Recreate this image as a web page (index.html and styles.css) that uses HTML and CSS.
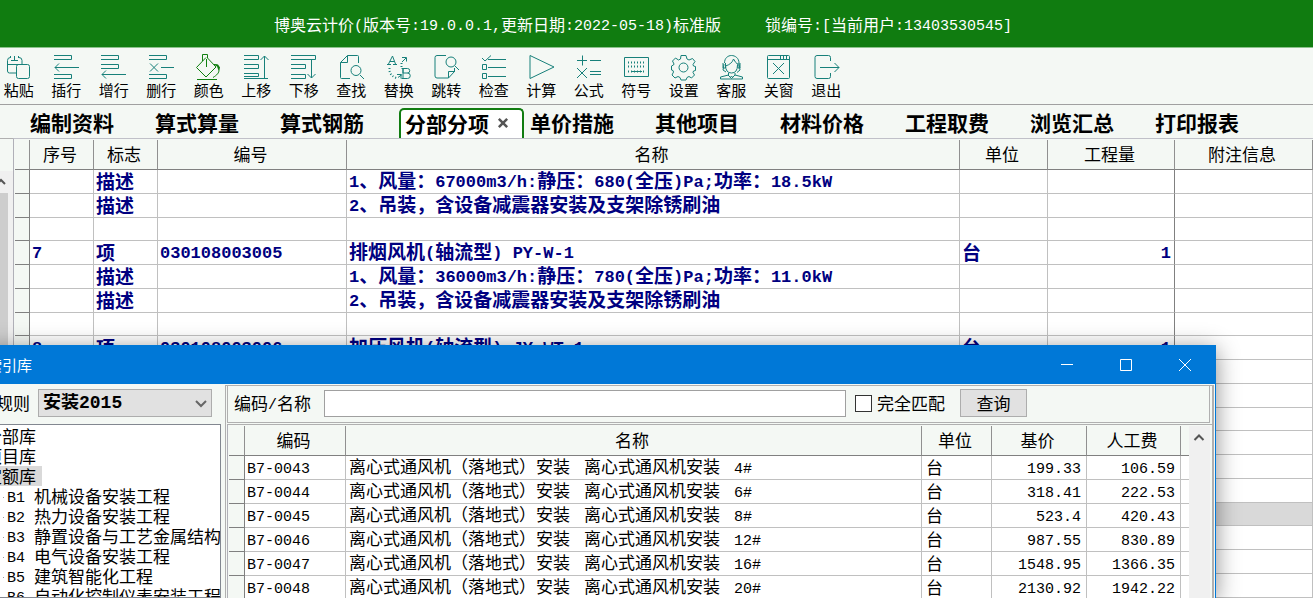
FILE: index.html
```html
<!DOCTYPE html>
<html lang="zh-CN">
<head>
<meta charset="utf-8">
<title>博奥云计价</title>
<link rel="stylesheet" href="styles.css">
</head>
<body>
<header class="titlebar">
  <span>博奥云计价<i>(</i>版本号<i>:19.0.0.1,</i>更新日期<i>:2022-05-18)</i>标准版</span>
  <span>锁编号<i>:[</i>当前用户<i>:13403530545]</i></span>
</header>

<nav class="toolbar" aria-label="工具栏">
  <div class="tools">
    <button class="tool"><svg viewBox="0 0 25 25"><path d="M4.500 2.500a3 3 0 0 0-3 3V16a2 2 0 0 0 2 2H10M1.500 9.500H16M8.500 1V6M5 5.500h7M13 2.500a3 3 0 0 1 3 3V9M4.500 1v2M12.500 1v2"/><rect x="10.500" y="9.500" width="13" height="14" rx="2"/></svg>粘贴</button>
    <button class="tool"><svg viewBox="0 0 25 25"><path d="M0 .5h17.500v4H0M1 12.500h24M5 8.500l-4 4 4 4M0 19.500h17.500v4H0"/></svg>插行</button>
    <button class="tool"><svg viewBox="0 0 25 25"><path d="M0 .5h17.500v4H0M0 9.500h17.500v4H0M1 19.500h24M5 15.500l-4 4 4 4"/></svg>增行</button>
    <button class="tool"><svg viewBox="0 0 25 25"><path d="M0 .5h17.500v4H0M1 8.500l8 8M9 8.500l-8 8M12 12.500h13M0 19.500h17.500v4H0"/></svg>删行</button>
    <button class="tool tool-color"><svg viewBox="0 0 25 25"><path d="M6.500 6V-.5h5V3l8.500 9-10 10L.5 12.500l9.500-10M10.500 4v8M18 9.500c4 0 5.500 2 5 5.500 0 3-2 5-6 7.500M1 24.500h20"/><path class="solid" d="M17 9l5 .5 2 3-1.500 3-1.500-4z"/></svg>颜色</button>
    <button class="tool"><svg viewBox="0 0 25 25"><path d="M0 .5h14.500v4H0M0 9.500h14.500v4H0M0 18.500h14.500v3H0M0 23.500h24M20.500 23V1M16.500 5l4-4 4 4"/></svg>上移</button>
    <button class="tool"><svg viewBox="0 0 25 25"><path d="M0 .5h24.500v4H0M0 9.500h14.500v4H0M0 19.500h14.500v4H0M20.500 5v18M16.500 19l4 4 4-4"/></svg>下移</button>
    <button class="tool"><svg viewBox="0 0 25 25"><path d="M8.500.5h10a1 1 0 0 1 1 1V8M8.500.5l-7 7V22.500a1 1 0 0 0 1 1H11M1.500 7.500h7v-7M21 20l4 4"/><circle cx="17" cy="15.500" r="5"/></svg>查找</button>
    <button class="tool"><svg viewBox="0 0 25 25"><path d="M1 9.500h4M7 9.500h4M2.500 9l4-8 3 8M4 6.500h4M15.500 13.500h6a2 2 0 0 1 0 4.500h-4.500v-4.500v9.500M15.500 23.500h6a2.500 2.500 0 0 0 0-5.500"/><path d="M16 2.500h4.500v4M20 3l-4 4M12 22.500l4-3M11 19.500h4v4"/><path class="dots" d="M15.500 8v4M3.500 13v3q1 5 7 7"/></svg>替换</button>
    <button class="tool"><svg viewBox="0 0 25 25"><path d="M12 .5H3a2 2 0 0 0-2 2V21a2 2 0 0 0 2 2h11.500l6-6.500h-6v6.500M20.500 13v4M21 11l4 4"/><circle cx="17" cy="7" r="5"/></svg>跳转</button>
    <button class="tool"><svg viewBox="0 0 25 25"><path d="M1 3l3 3 6-5.500M7 4.500h18M7 12.500h18M7 21.500h18M1.500 9.500h4v5h-4zM1.500 18.500h4v5h-4z"/></svg>检查</button>
    <button class="tool"><svg viewBox="0 0 25 25"><path d="M1 .5l24 11.500L1 23.500z"/></svg>计算</button>
    <button class="tool"><svg viewBox="0 0 25 25"><path d="M1 5.500h10M6.500.5v10M14 5.500h11M1 13l10 10M11 13L1 23M14 16.500h11M14 19.500h11"/></svg>公式</button>
    <button class="tool"><svg viewBox="0 0 25 25"><path d="M.5 2.500h24v19H.5zM7 16.500h11"/><path class="dots" d="M4 7.500h18M4 11.500h18M4 16.500h18"/></svg>符号</button>
    <button class="tool"><svg viewBox="0 0 25 25"><path d="M10 .5h5l1 3.500 2 1 3.500-1.500 2.500 3-2 3 .5 1.500 2 .5v4l-2 .5-.5 1.500 1.500 2.500-3 3-2.500-1.500-2 1-1 2.500h-5l-1-2.500-2-1L4 23l-3-3 1.500-3-.5-1.500-1.500-.5v-4L2.500 10 3 9 1.500 6l3-3L7.500 5 9.500 4z"/><circle cx="12.500" cy="12.500" r="4.500"/></svg>设置</button>
    <button class="tool"><svg viewBox="0 0 25 25"><path d="M5.500 8C5.500 3 9 .5 12.500.5S20 3 20 8l1 7-3 2.500M5 9L4 15l3 2M6.500 11Q13 9 14.500 4q2 4 5 6M6.500 10q0 8 6 8t6-8M4 8v5h2.500V8M19 8v5h2V8M9.500 18v2L1.500 22v2h22v-2L16 20v-2M9 20l3.500 3.500L16 20M11 23l1.500-2 1.500 2"/></svg>客服</button>
    <button class="tool"><svg viewBox="0 0 25 25"><rect x="1.500" y=".5" width="22" height="23" rx="1"/><path d="M1 4.500h22M14.500 1v3M17.500 1v3M20.500 1v3M7 8l11 11M18 8L7 19"/></svg>关窗</button>
    <button class="tool"><svg viewBox="0 0 25 25"><path d="M16.500 6V2.500a2 2 0 0 0-2-2H3a2 2 0 0 0-2 2v19a2 2 0 0 0 2 2h11.500a2 2 0 0 0 2-2V18M6 12.500h19M20.500 8l4.500 4.500-4.500 4.500"/></svg>退出</button>
  </div>
</nav>

<nav class="tabs" aria-label="页签">
  <button class="tab">编制资料</button>
  <button class="tab">算式算量</button>
  <button class="tab">算式钢筋</button>
  <button class="tab active">分部分项<svg viewBox="0 0 12 12"><path d="M1 1l10 10M11 1L1 11"/></svg></button>
  <button class="tab">单价措施</button>
  <button class="tab">其他项目</button>
  <button class="tab">材料价格</button>
  <button class="tab">工程取费</button>
  <button class="tab">浏览汇总</button>
  <button class="tab">打印报表</button>
</nav>

<main class="work">
  <div class="side">
    <div class="side-head"></div>
    <div class="side-scroll"><svg viewBox="0 0 10 8"><path d="M-3 6l4-4 4 4"/></svg><div class="side-thumb"></div></div>
  </div>
  <div class="sheet">
  <table class="grid main-grid">
    <colgroup><col class="m-gut"><col class="m-no"><col class="m-flag"><col class="m-code"><col><col class="m-unit"><col class="m-qty"><col class="m-note"></colgroup>
    <thead><tr><th></th><th>序号</th><th>标志</th><th>编号</th><th>名称</th><th>单位</th><th>工程量</th><th>附注信息</th></tr></thead>
    <tbody>
      <tr><td></td><td></td><td>描述</td><td></td><td><i>1</i>、风量：<i>67000m3/h:</i>静压：<i>680(</i>全压<i>)Pa;</i>功率：<i>18.5kW</i></td><td></td><td></td><td></td></tr>
      <tr><td></td><td></td><td>描述</td><td></td><td><i>2</i>、吊装，含设备减震器安装及支架除锈刷油</td><td></td><td></td><td></td></tr>
      <tr><td></td><td></td><td></td><td></td><td></td><td></td><td></td><td></td></tr>
      <tr><td></td><td><i>7</i></td><td>项</td><td><i>030108003005</i></td><td>排烟风机<i>(</i>轴流型<i>) PY-W-1</i></td><td>台</td><td><i>1</i></td><td></td></tr>
      <tr><td></td><td></td><td>描述</td><td></td><td><i>1</i>、风量：<i>36000m3/h:</i>静压：<i>780(</i>全压<i>)Pa;</i>功率：<i>11.0kW</i></td><td></td><td></td><td></td></tr>
      <tr><td></td><td></td><td>描述</td><td></td><td><i>2</i>、吊装，含设备减震器安装及支架除锈刷油</td><td></td><td></td><td></td></tr>
      <tr><td></td><td></td><td></td><td></td><td></td><td></td><td></td><td></td></tr>
      <tr><td></td><td><i>8</i></td><td>项</td><td><i>030108003006</i></td><td>加压风机<i>(</i>轴流型<i>) JY-WT-1</i></td><td>台</td><td><i>1</i></td><td></td></tr>
      <tr><td></td><td></td><td></td><td></td><td></td><td></td><td></td><td></td></tr>
      <tr><td></td><td></td><td></td><td></td><td></td><td></td><td></td><td></td></tr>
      <tr><td></td><td></td><td></td><td></td><td></td><td></td><td></td><td></td></tr>
      <tr><td></td><td></td><td></td><td></td><td></td><td></td><td></td><td></td></tr>
      <tr><td></td><td></td><td></td><td></td><td></td><td></td><td></td><td></td></tr>
      <tr><td></td><td></td><td></td><td></td><td></td><td></td><td></td><td></td></tr>
      <tr class="picked"><td></td><td></td><td></td><td></td><td></td><td></td><td></td><td></td></tr>
      <tr><td></td><td></td><td></td><td></td><td></td><td></td><td></td><td></td></tr>
      <tr><td></td><td></td><td></td><td></td><td></td><td></td><td></td><td></td></tr>
      <tr><td></td><td></td><td></td><td></td><td></td><td></td><td></td><td></td></tr>
    </tbody>
  </table>
  </div>
</main>

<section class="window" aria-label="索引库">
  <div class="window-bar">
    <span class="window-name">索引库</span>
    <button class="win-btn" aria-label="最小化"><svg viewBox="0 0 12 12"><path d="M0 5.500h12"/></svg></button>
    <button class="win-btn" aria-label="最大化"><svg viewBox="0 0 12 12"><path d="M.5.5h11v11H.5z"/></svg></button>
    <button class="win-btn" aria-label="关闭"><svg viewBox="0 0 12 12"><path d="M0 0l12 12M12 0L0 12"/></svg></button>
  </div>
  <div class="window-body">
    <div class="left">
      <div class="rule">
        <label for="rule">规则</label>
        <div class="pick"><select id="rule"><option>安装2015</option></select><svg viewBox="0 0 12 8"><path d="M1 1l5 5 5-5"/></svg></div>
      </div>
      <ul class="tree">
        <li><span>分部库</span></li>
        <li><span>项目库</span></li>
        <li class="current"><span>定额库</span>
          <ul>
            <li><i>B1 </i>机械设备安装工程</li>
            <li><i>B2 </i>热力设备安装工程</li>
            <li><i>B3 </i>静置设备与工艺金属结构</li>
            <li><i>B4 </i>电气设备安装工程</li>
            <li><i>B5 </i>建筑智能化工程</li>
            <li><i>B6 </i>自动化控制仪表安装工程</li>
          </ul>
        </li>
      </ul>
    </div>
    <div class="right">
      <form class="search">
        <label for="key">编码<i>/</i>名称</label>
        <input id="key" type="text">
        <label class="exact"><input type="checkbox">完全匹配</label>
        <button type="button">查询</button>
      </form>
      <div class="results">
        <table class="grid result-grid">
          <colgroup><col class="r-gut"><col class="r-code"><col><col class="r-unit"><col class="r-price"><col class="r-labor"><col class="r-end"></colgroup>
          <thead><tr><th></th><th>编码</th><th>名称</th><th>单位</th><th>基价</th><th>人工费</th><th></th></tr></thead>
          <tbody>
            <tr><td></td><td><i>B7-0043</i></td><td><div class="parts"><span>离心式通风机（落地式）安装</span><span>离心式通风机安装</span><i>4#</i></div></td><td>台</td><td><i>199.33</i></td><td><i>106.59</i></td><td></td></tr>
            <tr><td></td><td><i>B7-0044</i></td><td><div class="parts"><span>离心式通风机（落地式）安装</span><span>离心式通风机安装</span><i>6#</i></div></td><td>台</td><td><i>318.41</i></td><td><i>222.53</i></td><td></td></tr>
            <tr><td></td><td><i>B7-0045</i></td><td><div class="parts"><span>离心式通风机（落地式）安装</span><span>离心式通风机安装</span><i>8#</i></div></td><td>台</td><td><i>523.4</i></td><td><i>420.43</i></td><td></td></tr>
            <tr><td></td><td><i>B7-0046</i></td><td><div class="parts"><span>离心式通风机（落地式）安装</span><span>离心式通风机安装</span><i>12#</i></div></td><td>台</td><td><i>987.55</i></td><td><i>830.89</i></td><td></td></tr>
            <tr><td></td><td><i>B7-0047</i></td><td><div class="parts"><span>离心式通风机（落地式）安装</span><span>离心式通风机安装</span><i>16#</i></div></td><td>台</td><td><i>1548.95</i></td><td><i>1366.35</i></td><td></td></tr>
            <tr><td></td><td><i>B7-0048</i></td><td><div class="parts"><span>离心式通风机（落地式）安装</span><span>离心式通风机安装</span><i>20#</i></div></td><td>台</td><td><i>2130.92</i></td><td><i>1942.22</i></td><td></td></tr>
          </tbody>
        </table>
        <div class="result-scroll"><svg viewBox="0 0 12 8"><path d="M1.500 7L6 2.500 10.500 7"/></svg></div>
      </div>
    </div>
  </div>
</section>
</body>
</html>
```

FILE: styles.css
```css
* { box-sizing: border-box; }

body {
  margin: 0;
  height: 100vh;
  overflow: hidden;
  position: relative;
  background: #f4f8f4;
  color: #000;
  font: 17px/20px "Noto Sans CJK SC", sans-serif;
}

button, input, select { font: inherit; color: inherit; border-radius: 0; margin: 0; }
button { background: none; border: 0; padding: 0; }
svg { fill: none; stroke: currentColor; overflow: visible; }

/* half-width characters */
i {
  font-family: "Liberation Mono", monospace;
  font-style: normal;
  font-size: 15px;
  line-height: 1;
  vertical-align: 1px;
  white-space: pre;
}

.titlebar {
  display: flex;
  justify-content: center;
  gap: 44px;
  height: 48px;
  padding: 14px 27px 0 0;
  background: #107c10;
  border-bottom: 1px solid #8cc28c;
  color: #fff;
  font-size: 16px;
}

.toolbar { height: 57px; overflow: hidden; border-bottom: 1px solid #a0a0a0; }
.tools { display: flex; width: 855px; margin-left: -5px; padding-top: 7px; }
.tool {
  flex: 1;
  display: flex;
  flex-direction: column;
  align-items: center;
  font-size: 15px;
}
.tool svg { width: 25px; height: 25px; color: #17807a; }
.tool.tool-color svg { color: #108010; }
.tool .dots { stroke-dasharray: 1 2; stroke-width: 2; }
.tool .solid { fill: currentColor; stroke: none; }

.tabs { display: flex; height: 33px; padding: 3px 0 0 24px; }
.tab {
  display: flex;
  align-items: center;
  width: 125px;
  flex: none;
  padding: 0 0 2px 6px;
  font-size: 21px;
  font-weight: 700;
}
.tab.active {
  gap: 9px;
  padding-left: 4px;
  border: 2px solid #107c10;
  border-bottom: 0;
  border-radius: 5px 5px 0 0;
  background: #fff;
}
.tab.active svg { width: 10px; height: 10px; color: #555; stroke-width: 3; }

.work { display: flex; }
.side { width: 13px; flex: none; display: flex; flex-direction: column; }
.side-head { height: 33px; border-top: 1px solid #b0b0b0; }
.side-scroll { flex: 1; width: 13px; background: #f0f0f0; display: flex; flex-direction: column; }
.side-scroll svg { width: 10px; height: 8px; margin: 7px 0; color: #555; stroke-width: 2; }
.side-thumb { flex: 1; width: 8px; background: #cdcdcd; }
.sheet { flex: 1; border-top: 1px solid #c0c0c8; border-left: 1px solid #b0b0b8; padding: 1px 0 0 1px; }

.grid { width: 100%; table-layout: fixed; border-collapse: separate; border-spacing: 0; }
.grid th {
  height: 30px;
  padding: 0 3px 2px 0;
  background: #f4f8f4;
  border-right: 1px solid #909090;
  border-bottom: 1px solid #808080;
  font-weight: 400;
}
.grid td {
  height: 24px;
  padding: 0 3px 2px 2px;
  white-space: nowrap;
  background: #fff;
  border-right: 1px solid #c0c0c0;
  border-bottom: 1px solid #c0c0c0;
  line-height: 20px;
}
.grid td:first-child { background: #f4f8f4; border-color: #808080; }
.grid tr:nth-child(4n + 3) td { height: 23px; }

.m-gut { width: 15px; }
.m-no, .m-flag { width: 64px; }
.m-code { width: 189px; }
.m-unit { width: 88px; }
.m-qty { width: 127px; }
.m-note { width: 138px; }
.main-grid td { color: #000080; font-size: 19px; font-weight: 700; }
.main-grid i { font-size: 17px; }
.main-grid td:nth-child(7) { text-align: right; border-right-color: #808080; }
.main-grid .picked td { background: #d9d9d9; }

.window {
  position: absolute;
  left: -16px;
  right: 97px;
  top: 345px;
  bottom: 0;
  display: flex;
  flex-direction: column;
  background: #f4f8f4;
  border-right: 1px solid #0078d7;
  box-shadow: 0 4px 22px rgba(0, 0, 0, 0.45);
}
.window-bar {
  flex: none;
  display: flex;
  align-items: center;
  height: 39px;
  padding: 0 24px 0 3px;
  background: #0078d7;
  color: #fff;
  font-size: 15px;
}
.window-name { flex: 1; }
.win-btn { width: 12px; height: 12px; margin-left: 47px; display: flex; }
.win-btn svg { width: 12px; height: 12px; }

.window-body { flex: 1; min-height: 0; display: flex; overflow: hidden; }
.left { width: 241px; flex: none; display: flex; flex-direction: column; padding: 5px 4px 0 0; }
.rule { display: flex; align-items: center; gap: 8px; padding: 0 9px 0 12px; }
.rule label { flex: none; }
.pick { flex: 1; position: relative; }
.pick select {
  display: block;
  width: 100%;
  height: 28px;
  appearance: none;
  padding: 0 4px;
  border: 1px solid #adadad;
  background: #e1e1e1;
  font: bold 18px "Liberation Mono", "Noto Sans CJK SC", monospace;
}
.pick svg { position: absolute; right: 5px; top: 11px; width: 12px; height: 8px; color: #666; stroke-width: 2; }
.tree {
  flex: 1;
  margin: 7px 0 0;
  padding: 1px 0 0;
  overflow: hidden;
  list-style: none;
  background: #fff;
  border: 1px solid #828790;
  white-space: nowrap;
}
.tree > li > span { display: block; width: max-content; height: 20px; padding-right: 6px; }
.tree .current > span { background: #d9d9d9; }
.tree ul { list-style: none; margin: 0; padding: 0 0 0 18px; }
.tree ul li { height: 20px; }
.tree ul li::before { content: ""; display: inline-block; width: 1px; height: 1px; margin: 0 3px 5px 0; background: #999; }

.right {
  flex: 1;
  min-width: 0;
  display: flex;
  flex-direction: column;
  border: 1px solid #b0b0b0;
  border-width: 1px 2px 0 1px;
  margin: 1px 1px 0 0;
  padding-left: 1px;
}
.search {
  display: flex;
  align-items: center;
  height: 37px;
  flex: none;
  padding: 0 182px 2px 6px;
  border: 1px solid #b0b0b0;
  border-top: 0;
  margin: 0 2px 1px 0;
}
.search input[type="text"] { flex: 1; min-width: 0; height: 27px; margin: 0 9px 0 13px; border: 1px solid #a0a0a0; background: #fff; }
.search .exact { display: flex; align-items: center; gap: 5px; }
.search input[type="checkbox"] { appearance: none; width: 17px; height: 17px; border: 1px solid #333; background: #fff; }
.search button { width: 67px; height: 28px; margin-left: 15px; border: 1px solid #adadad; background: #e1e1e1; }

.results { flex: 1; min-height: 0; display: flex; border-top: 1px solid #b0b0b0; border-left: 1px solid #b0b0b8; padding: 1px 2px 0 1px; }
.result-grid { flex: 1; min-width: 0; align-self: flex-start; }
.result-grid td:nth-child(5), .result-grid td:nth-child(6) { text-align: right; padding-right: 5px; }
.result-grid td:nth-child(3) { padding-left: 3px; }
.result-grid td:nth-child(4) { padding-left: 4px; }
.result-grid th:last-child, .result-grid td:last-child { border-right: 0; padding: 0; }
.r-gut { width: 16px; }
.r-code { width: 101px; }
.r-unit { width: 70px; }
.r-price { width: 95px; }
.r-labor { width: 94px; }
.r-end { width: 8px; }
.parts { display: flex; align-items: baseline; gap: 14px; }
.result-scroll { width: 21px; flex: none; background: #f0f0f0; padding: 7px 0 0 4px; }
.result-scroll svg { display: block; width: 12px; height: 8px; color: #555; stroke-width: 2; }
```
